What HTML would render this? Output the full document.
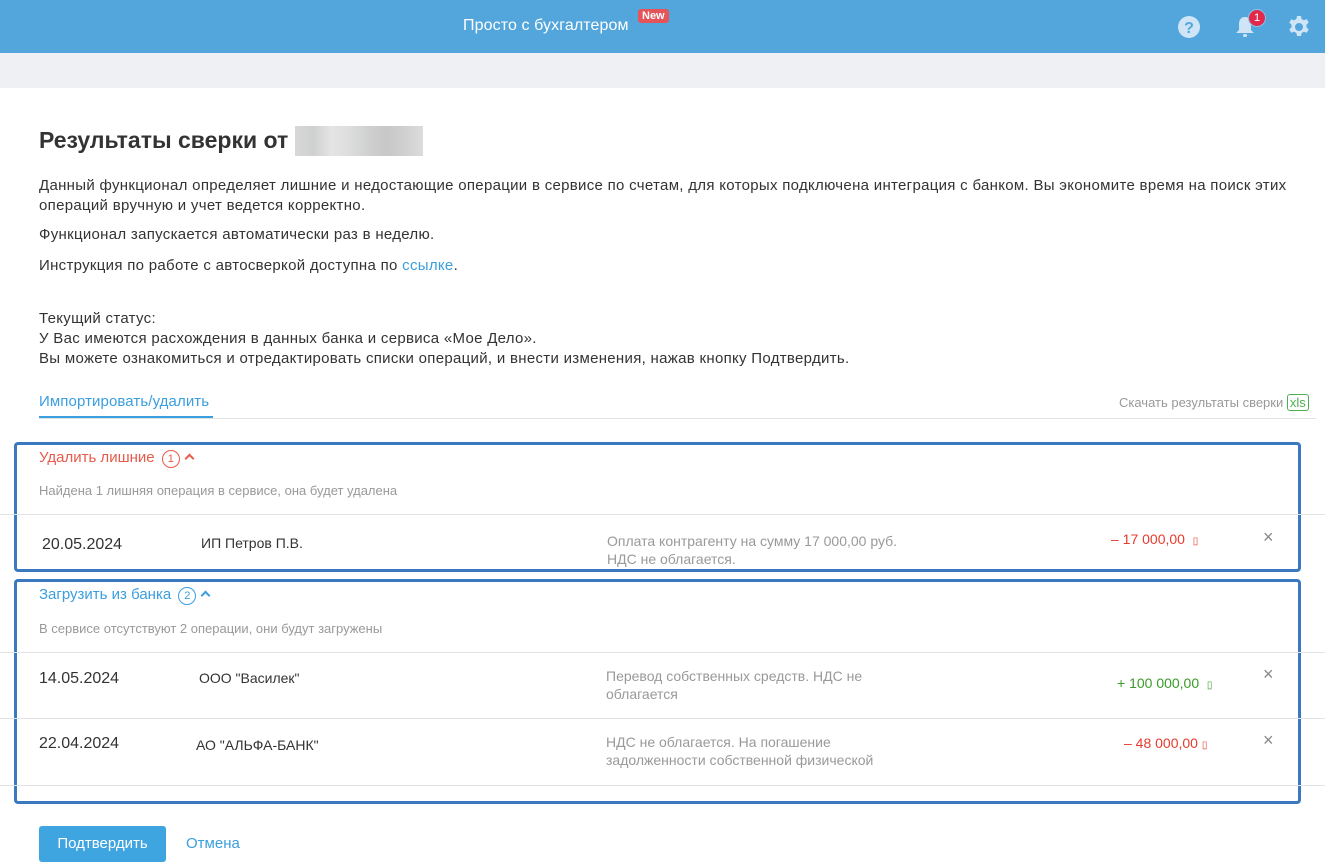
<!DOCTYPE html>
<html><head><meta charset="utf-8"><style>
*{margin:0;padding:0;box-sizing:border-box}
body{width:1325px;height:866px;overflow:hidden;background:#fff;font-family:"Liberation Sans",sans-serif;color:#333;position:relative}
.a{position:absolute;white-space:nowrap}
.hdr{position:absolute;left:0;top:0;width:1325px;height:53px;background:#52a6dc}
.band{position:absolute;left:0;top:53px;width:1325px;height:35px;background:#eef0f3}
.p{font-size:15px;letter-spacing:.3px;color:#333}
.line{position:absolute;height:1px;background:#e3e3e3}
.box{position:absolute;border:3px solid #3a78c0;border-radius:4px}
.g{color:#999;font-size:14px;line-height:18px}
.x{color:#888;font-size:18px}
.chev{display:inline-block;width:7px;height:7px;border-left:2px solid currentColor;border-top:2px solid currentColor;transform:rotate(45deg);margin-left:6px;position:relative;top:0px}
.badge{display:inline-block;width:18px;height:18px;border:1px solid currentColor;border-radius:9px;font-size:11px;text-align:center;line-height:16px;margin-left:3px;letter-spacing:0}
</style></head><body>
<div class="hdr"></div>
<div class="a" style="left:463px;top:17px;color:#fff;font-size:16px;letter-spacing:.1px">Просто с бухгалтером</div>
<div class="a" style="left:638px;top:9px;background:#e4545a;color:#fff;font-size:11px;font-weight:bold;padding:1px 4px;border-radius:3px">New</div>
<svg class="a" style="left:1177px;top:15px" width="24" height="24" viewBox="0 0 24 24"><circle cx="12" cy="12" r="11" fill="#cfe5f6"/><text x="12" y="18" text-anchor="middle" font-family="Liberation Sans" font-weight="bold" font-size="16" fill="#52a6dc">?</text></svg>
<svg class="a" style="left:1233px;top:14px" width="24" height="26" viewBox="0 0 24 26"><path d="M12 3c-4 0-6 3-6 7v6l-3 3h18l-3-3v-6c0-4-2-7-6-7z" fill="#cfe5f6"/><rect x="10" y="20" width="4" height="3" rx="1.5" fill="#cfe5f6"/></svg>
<div class="a" style="left:1248px;top:9px;width:18px;height:18px;border-radius:9px;background:#e0294b;border:1px solid #8cc2e8;color:#fff;font-size:11px;text-align:center;line-height:16px">1</div>
<svg class="a" style="left:1287px;top:15px" width="24" height="24" viewBox="0 0 24 24"><path fill="#cfe5f6" fill-rule="evenodd" d="M10 1h4l.6 3 2.3 1.3 2.8-1.2 2 3.4-2.2 2v2.9l2.2 2-2 3.4-2.8-1.1-2.3 1.3-.6 3h-4l-.6-3-2.3-1.3-2.8 1.1-2-3.4 2.2-2V9.6l-2.2-2 2-3.4 2.8 1.2L9.4 4zM12 8a4 4 0 100 8 4 4 0 000-8z"/></svg>
<div class="band"></div>
<div class="a" style="left:39px;top:127px;font-size:23px;font-weight:bold;color:#333">Результаты сверки от</div>
<div class="a" style="left:295px;top:126px;width:128px;height:30px;background:linear-gradient(90deg,#d8d8d8,#cfd0d0,#e4e4e4,#dddddd,#cfd0d0,#c8c8c8,#d0d0d0,#dcdcdc)"></div>
<div class="a p" style="left:39px;top:176px;line-height:20px">Данный функционал определяет лишние и недостающие операции в сервисе по счетам, для которых подключена интеграция с банком. Вы экономите время на поиск этих<br>операций вручную и учет ведется корректно.</div>
<div class="a p" style="left:39px;top:226px">Функционал запускается автоматически раз в неделю.</div>
<div class="a p" style="left:39px;top:257px">Инструкция по работе с автосверкой доступна по <span style="color:#3a9ee0">ссылке</span>.</div>
<div class="a p" style="left:39px;top:309px;line-height:20px">Текущий статус:<br>У Вас имеются расхождения в данных банка и сервиса «Мое Дело».<br>Вы можете ознакомиться и отредактировать списки операций, и внести изменения, нажав кнопку Подтвердить.</div>
<div class="a" style="left:39px;top:393px;font-size:15px;color:#3a9ee0;letter-spacing:.1px">Импортировать/удалить</div>
<div class="a" style="left:39px;top:416px;width:174px;height:2px;background:#3a9ee0"></div>
<div class="line" style="left:39px;top:418px;width:1277px"></div>
<div class="a" style="left:1119px;top:395px;font-size:13px;color:#999">Скачать результаты сверки <span style="color:#4caf50;border:1px solid #4caf50;border-radius:3px;padding:0 2px">xls</span></div>

<div class="box" style="left:14px;top:442px;width:1287px;height:130px"></div>
<div class="a" style="left:39px;top:449px;font-size:15px;color:#e85a4a">Удалить лишние <span class="badge">1</span><span class="chev"></span></div>
<div class="a" style="left:39px;top:483px;font-size:13px;color:#999">Найдена 1 лишняя операция в сервисе, она будет удалена</div>
<div class="line" style="left:0;top:514px;width:1325px"></div>
<div class="a" style="left:42px;top:536px;font-size:16px">20.05.2024</div>
<div class="a" style="left:201px;top:535px;font-size:14px">ИП Петров П.В.</div>
<div class="a g" style="left:607px;top:532px">Оплата контрагенту на сумму 17 000,00 руб.<br>НДС не облагается.</div>
<div class="a" style="left:1111px;top:531px;font-size:14px;color:#e63b2e">– 17 000,00 &nbsp;<span style="font-size:10px">▯</span></div>
<div class="a x" style="left:1263px;top:527px">×</div>

<div class="box" style="left:14px;top:579px;width:1287px;height:225px"></div>
<div class="a" style="left:39px;top:586px;font-size:15px;color:#3a9ee0">Загрузить из банка <span class="badge">2</span><span class="chev"></span></div>
<div class="a" style="left:39px;top:621px;font-size:13px;color:#999">В сервисе отсутствуют 2 операции, они будут загружены</div>
<div class="line" style="left:0;top:652px;width:1325px"></div>
<div class="a" style="left:39px;top:670px;font-size:16px">14.05.2024</div>
<div class="a" style="left:199px;top:670px;font-size:14px">ООО "Василек"</div>
<div class="a g" style="left:606px;top:667px">Перевод собственных средств. НДС не<br>облагается</div>
<div class="a" style="left:1117px;top:675px;font-size:14px;color:#3a9a2a">+ 100 000,00 &nbsp;<span style="font-size:10px">▯</span></div>
<div class="a x" style="left:1263px;top:664px">×</div>
<div class="line" style="left:0;top:718px;width:1325px"></div>
<div class="a" style="left:39px;top:735px;font-size:16px">22.04.2024</div>
<div class="a" style="left:196px;top:737px;font-size:14px">АО "АЛЬФА-БАНК"</div>
<div class="a g" style="left:606px;top:733px">НДС не облагается. На погашение<br>задолженности собственной физической</div>
<div class="a" style="left:1124px;top:735px;font-size:14px;color:#e63b2e">– 48 000,00 <span style="font-size:10px">▯</span></div>
<div class="a x" style="left:1263px;top:730px">×</div>
<div class="line" style="left:0;top:785px;width:1325px"></div>

<div class="a" style="left:39px;top:826px;width:127px;height:36px;background:#3fa5e0;border-radius:3px;color:#fff;font-size:15px;text-align:center;line-height:36px">Подтвердить</div>
<div class="a" style="left:186px;top:835px;font-size:15px;color:#3a9ee0">Отмена</div>
</body></html>
